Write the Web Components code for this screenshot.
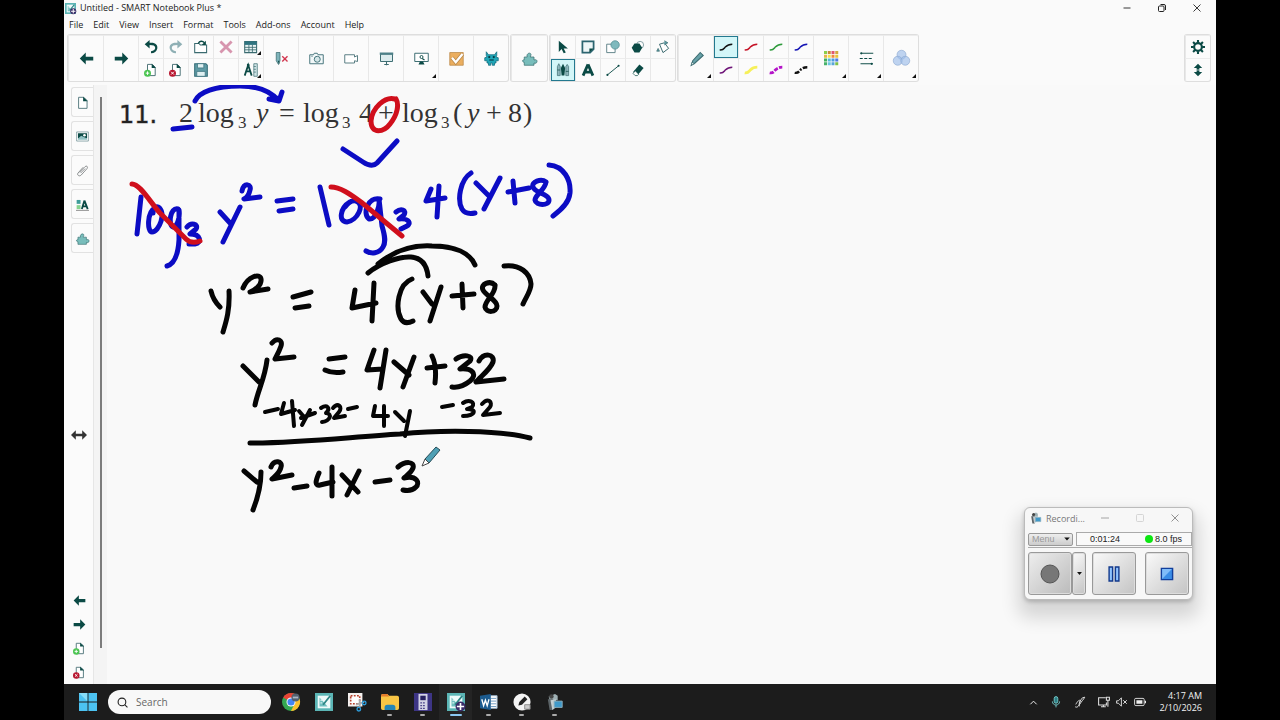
<!DOCTYPE html>
<html lang="en">
<head>
<meta charset="utf-8">
<title>Untitled - SMART Notebook Plus *</title>
<style>
  html, body { margin: 0; background: #000; }
  body { font-family: "Open Sans", "Noto Sans", sans-serif; font-size: 9px; color: #1b1b1b; }
</style>
</head>
<body>
<notebook-app></notebook-app>
<script>
const define = (tag, css, html, setup) => {
  const template = document.createElement('template');
  template.innerHTML = `<style>*{box-sizing:border-box}${css}</style>${html}`;
  customElements.define(tag, class extends HTMLElement {
    connectedCallback() {
      if (this.shadowRoot) return;
      const content = template.content.cloneNode(true);
      if (setup) setup(this, content);
      this.attachShadow({ mode: 'open' }).append(content);
    }
  });
};

/* ---------- icons, drawn on a 20 x 20 grid ---------- */
const page = '<path d="M5 2h7l4 4v12H5z" fill="#fff" stroke="#4d7378" stroke-width="1.4"/><path d="M11 1l6 6h-6z" fill="#0b4a45"/>';
const addPage = page + '<circle cx="5" cy="14.500" r="5" fill="#4cc552"/><path d="M5 12v5M2.500 14.500h5" stroke="#fff" stroke-width="1.4"/>';
const delPage = page + '<circle cx="5" cy="14.500" r="5" fill="#b8152f"/><path d="M3 12.500l4 4M7 12.500l-4 4" stroke="#fff" stroke-width="1.4"/>';
const squiggle = (c, w, dash) => `<path d="M1 14C6 15 7 12 9 10S14 6 19 6" fill="none" stroke="${c}" stroke-width="${w}" ${dash ? `stroke-dasharray="${dash}"` : ''}/>`;
const puzzle = '<path d="M3 8h4C5 3 12 1 12 5c0 1-1 2-1 3h5v4c3-1 4 0 4 2s-2 3-4 2v3H3v-4c-3 0-3-4 0-3z" fill="#78bdbb" stroke="#3b7173" stroke-width="1"/>';
const swatches = ['#8bcf4a','#c98a3a','#e0566d','#d2a83c','#e8b64a','#f6e34a','#f08a3c','#e8c53a','#43b35c','#54b9d8','#4d9de0','#4f7de0','#48b26a','#6cc6e0','#58a6d8','#7cc04a'];
const notebook = '<rect width="20" height="20" fill="#5bb5b5"/><path d="M3 3h14v14H3z" fill="#eefafa"/><path d="M5 15V5l9 10z" fill="#6fbfbf"/><path d="M6 8h2M6 11h2" stroke="#fff"/><path d="M9 13L17 3" stroke="#2d8585" stroke-width="2"/>';
const camcorder = '<path d="M3 4l7-3 3 2v5H4z" fill="#9fb0b4"/><path d="M2 7h6v12H4z" fill="#5b6367"/><path d="M5 8l6-1v9l-4 3z" fill="#c3ced1"/><path d="M9 9h9v7H9z" fill="#3f99c9" stroke="#8fb0bd"/><circle cx="6" cy="4" r="2.500" fill="#444"/>';
const ICONS = {
  back: '<path d="M9 2L1 10l8 8v-5.500h10v-5H9z" fill="#0b4a45"/>',
  forward: '<path d="M11 2l8 8-8 8v-5.500H1v-5h10z" fill="#0b4a45"/>',
  undo: '<path d="M8 0v4c8-1 12 3 11 8-1 4-4 7-9 7v-3c5-1 6-3 6-5 0-3-3-4-8-4v5L1 6z" fill="#0b4a45"/>',
  redo: '<path d="M12 0v4C4 3 0 7 1 12c1 4 4 7 9 7v-3c-5-1-6-3-6-5 0-3 3-4 8-4v5l7-6z" fill="#8fb0b5"/>',
  addPage, delPage,
  open: '<path d="M1 5h6l2 2h9v11H1z" fill="#fff" stroke="#3b6b70" stroke-width="1.500"/><path d="M6 5c2-4 6-4 9-1" fill="none" stroke="#0b4a45" stroke-width="2"/><path d="M17 1v6h-6z" fill="#0b4a45"/>',
  save: '<path d="M1 1h16l2 2v16H1z" fill="#5f9ba5" stroke="#356d78" stroke-width="1.500"/><path d="M5 1h9v6H5zM4 12h12v7H4z" fill="#dff0f2" stroke="#356d78"/>',
  remove: '<path d="M2 2l16 16M18 2L2 18" stroke="#d795ae" stroke-width="4"/>',
  table: '<path d="M1 2h17v16H1z" fill="#e9f4f5" stroke="#3b6b70" stroke-width="1.500"/><path d="M1 2h17v5H1z" fill="#2f7480"/><path d="M1 10.500h17M1 14h17M7 7v11M12 7v11" stroke="#3b6b70" stroke-width="1.200"/>',
  measure: '<path d="M1 18L6 3l5 15M3 12h6" fill="none" stroke="#0b4a45" stroke-width="2.500"/><circle cx="6" cy="3" r="2" fill="#0b4a45"/><path d="M14 1h5v18h-5z" fill="#cfe4e6" stroke="#3b6b70"/><path d="M14 5h3M14 9h3M14 13h3" stroke="#3b6b70"/>',
  clearInk: '<path d="M3 2h5v11l-2 5-3-5z" fill="#7fb4bb" stroke="#3b6b70"/><path d="M5 13h2v5z" fill="#0b4a45"/><path d="M11 7l7 7M18 7l-7 7" stroke="#d2354e" stroke-width="1.800"/>',
  camera: '<path d="M1 5h5l1-2h4l1 2h7v12H1z" fill="#f2f8f9" stroke="#47757b" stroke-width="1.300"/><circle cx="11" cy="11" r="4" fill="#d4e6e8" stroke="#47757b" stroke-width="1.300"/><path d="M3 7h2" stroke="#47757b"/>',
  video: '<path d="M1 5h13v3l4-2v8l-4-1v3H1z" fill="#fff" stroke="#587d83" stroke-width="1.300"/>',
  screen: '<path d="M2 4h16v10H2z" fill="#dcecee" stroke="#3b6b70" stroke-width="1.300"/><path d="M1 2h18v3H1z" fill="#4c8088"/><path d="M10 14v5M7 18h6" stroke="#3b6b70" stroke-width="1.400"/>',
  monitor: '<path d="M1 3h18v11H1z" fill="#fff" stroke="#3b6b70" stroke-width="1.300"/><path d="M6 18h8l-2-4H8z" fill="#0b4a45"/><circle cx="10" cy="8" r="2" fill="none" stroke="#0b4a45" stroke-width="1.200"/><path d="M11 10l3 2" stroke="#0b4a45" stroke-width="1.500"/>',
  check: '<path d="M1 2h18v17H1z" fill="#ebae5f" stroke="#b98849"/><path d="M4 9l5 6 9-11" fill="none" stroke="#b98849" stroke-width="5"/><path d="M4 9l5 6 9-11" fill="none" stroke="#fff" stroke-width="3"/>',
  monster: '<path d="M3 1l3 4h8l3-4v5l-1 2 3 1v4h-3v3h-2v3h-3v-3H9v3H6v-3H4v-3H1V9l3-1-1-2z" fill="#20a7b8" stroke="#126a7c"/><circle cx="7" cy="8" r="1.500" fill="#043a44"/><circle cx="13" cy="8" r="1.500" fill="#043a44"/><path d="M7 12h6" stroke="#043a44" stroke-width="1.500"/>',
  puzzle,
  select: '<path d="M4 1v16l4-4 3 6 3-1-3-6h6z" fill="#0b4a45"/>',
  note: '<path d="M2 2h16v11l-5 5H2z" fill="#eef6f7" stroke="#2c6570" stroke-width="2.500"/><path d="M12 18v-6h6z" fill="#0b4a45"/>',
  shapes: '<path d="M1 6h12v12H1z" fill="#fff" stroke="#587d83" stroke-width="1.300"/><circle cx="13" cy="7" r="6" fill="#7fb9bd" stroke="#4a868c"/>',
  polygons: '<circle cx="13" cy="7" r="5" fill="#fff" stroke="#587d83"/><path d="M5 5h7l4 6-4 7H5l-4-7z" fill="#0b4a45"/>',
  fill: '<path d="M5 6l7-2 6 8-8 6z" fill="#fff" stroke="#3b6b70" stroke-width="1.400"/><path d="M12 1l5 3-5 3M3 12l-2 4h4z" fill="#5b9aa3" stroke="#3b6b70"/>',
  pens: '<path d="M2 5l2-4 2 4v13H2zM14 5l2-3 2 3v13h-4z" fill="#8fb7bd" stroke="#3b6b70"/><path d="M10 1l3 6-1 11H8L7 7z" fill="#0b4a45"/><path d="M2 10h4M14 12h4" stroke="#0b4a45"/>',
  text: '<path d="M10 2L3 18M10 2l7 16M6 13h8" fill="none" stroke="#0b4a45" stroke-width="4"/>',
  line: '<path d="M2 17L18 4" stroke="#0b4a45" stroke-width="1.300"/><circle cx="2" cy="17" r="1.500" fill="#0b4a45"/><circle cx="18" cy="4" r="1.500" fill="#0b4a45"/>',
  eraser: '<path d="M12 2l6 5-9 11-6-5z" fill="#0b4a45"/><path d="M6 11l5 5-2 2H6l-3-3z" fill="#fff" stroke="#0b4a45"/>',
  pencil: '<path d="M15 2l4 4-11 10-5 3 2-6z" fill="#67a1a8" stroke="#3b6b70" stroke-width="1.400"/><path d="M3 19l1-4 3 2z" fill="#fff" stroke="#3b6b70"/>',
  inkBlack: squiggle('#111', 2.2), inkRed: squiggle('#c51226', 2.2), inkGreen: squiggle('#2d9a3b', 2.2), inkBlue: squiggle('#1414b4', 2.2),
  inkPurple: squiggle('#6e1478', 2.2), inkYellow: squiggle('#f6f05a', 4), inkMagenta: squiggle('#b414c8', 4, '6 2'), inkDash: squiggle('#111', 3.4, '7 2 3 2'),
  palette: swatches.map((c, i) => `<path d="M${i % 4 * 5} ${(i >> 2) * 5}h4v4h-4z" fill="${c}"/>`).join(''),
  lines: '<path d="M3 3h16M2 17h16" stroke="#0b4a45" stroke-width="1.300"/><path d="M1 10h18" stroke="#0b4a45" stroke-width="1.500" stroke-dasharray="4 2"/><circle cx="3" cy="3" r="1.500" fill="#0b4a45"/><circle cx="17" cy="17" r="1.500" fill="#0b4a45"/>',
  rings: '<g fill="#9dbdea" fill-opacity=".65" stroke="#8aa6cf" stroke-width=".8"><circle cx="10" cy="5" r="6"/><circle cx="5" cy="13" r="6"/><circle cx="15" cy="13" r="6"/></g>',
  gear: '<circle cx="10" cy="10" r="5.500" fill="none" stroke="#0b4a45" stroke-width="3"/><g stroke="#0b4a45" stroke-width="3"><path d="M10 4V0M10 16v4M4 10H0M16 10h4M6 6L3 3M14 14l3 3M14 6l3-3M6 14l-3 3"/></g>',
  updown: '<path d="M10 1l6 6h-4v6h4l-6 6-6-6h4V7H4z" fill="#0b4a45"/><path d="M2 10h16" stroke="#fafafa" stroke-width="1"/>',
  leftright: '<path d="M0 10l6-6v4.500h8V4l6 6-6 6v-4.500H6V16z" fill="#333"/>',
  blank: '<path d="M4 2h8l5 5v12H4z" fill="#fff" stroke="#4d7378" stroke-width="1.400"/><path d="M11 1l7 7h-7z" fill="#0b4a45"/>',
  gallery: '<path d="M1 3h18v14H1z" fill="#fff" stroke="#5a8085"/><path d="M3 5h14v8H3z" fill="#0b4a45"/><path d="M3 13l5-4 9 4v2H3z" fill="#8fc0c2"/><circle cx="13" cy="8" r="2" fill="#fff"/>',
  clip: '<path d="M5 13l9-9c2-2 5 0 3 3L8 17c-3 3-7 0-5-3l8-9M7 14l7-7" fill="none" stroke="#8b8f90" stroke-width="1.500"/>',
  props: '<path d="M1 3h6v6H1z" fill="#3f9d9a"/><path d="M1 11h6v6H1z" fill="#86d38f"/><path d="M13 4L9 17M13 4l5 13M10 13h7" fill="none" stroke="#0b4a45" stroke-width="2.800"/><path d="M0 19h20" stroke="#555"/>',
  app: notebook + '<circle cx="15" cy="15" r="5.500" fill="#3a2c68"/><path d="M15 11v8M11 15h8" stroke="#fff" stroke-width="1.800"/>',
  notebook,
  min: '<path d="M3 10h14" stroke="#222" stroke-width="1.800"/>',
  restore: '<rect x="3" y="6" width="11" height="11" rx="2" fill="none" stroke="#222" stroke-width="2"/><path d="M7 3h7q3 0 3 3v8" fill="none" stroke="#222" stroke-width="2"/>',
  close: '<path d="M3 3l14 14M17 3L3 17" stroke="#222" stroke-width="1.800"/>',
  maxLight: '<rect x="3" y="3" width="14" height="14" rx="2" fill="none" stroke="#ccc" stroke-width="1.600"/>',
  minLight: '<path d="M2 10h16" stroke="#888" stroke-width="1.500"/>',
  closeLight: '<path d="M3 3l14 14M17 3L3 17" stroke="#777" stroke-width="1.600"/>',
  camcorder,
  record: '<circle cx="10" cy="10" r="9" fill="#777" stroke="#555"/>',
  pause: '<path d="M3 0h5v20H3zM12 0h5v20h-5z" fill="#8fc4ff" stroke="#12398c" stroke-width="2"/>',
  stop: '<path d="M2 2h16v16H2z" fill="#3b8de6" stroke="#123f9c" stroke-width="2"/><path d="M3 3h14L3 17z" fill="#9fd0ff" opacity=".7"/>',
  caret: '<path d="M3 6h14l-7 8z" fill="#111"/>',
  windows: '<path d="M0 0h9.500v9.500H0zM10.500 0H20v9.500h-9.500zM0 10.500h9.500V20H0zM10.500 10.500H20V20h-9.500z" fill="#4cc2f1"/><path d="M0 0h9v9z" fill="#86dcf8"/>',
  search: '<circle cx="9" cy="9" r="7" fill="none" stroke="#222" stroke-width="2"/><path d="M14 14l5 5" stroke="#222" stroke-width="2"/>',
  chrome: '<circle cx="10" cy="10" r="10" fill="#34a853"/><path d="M1.300 5A10 10 0 0 1 18.700 5L10 10z" fill="#ea4335"/><path d="M18.700 5A10 10 0 0 1 10 20l4-8V5z" fill="#fbc02d"/><circle cx="10" cy="10" r="5" fill="#fff"/><circle cx="10" cy="10" r="4" fill="#4285f4"/><circle cx="15" cy="5" r="4.500" fill="#53606e"/><path d="M12 5h6" stroke="#a9b6c6" stroke-width="2"/>',
  snip: '<path d="M0 0h16v15H0z" fill="#f4f1ef"/><path d="M3 3h10v9H3z" fill="#fff" stroke="#b8412c" stroke-width="1.800" stroke-dasharray="2 1.500"/><path d="M9 13l9-3M13 7l0 9" stroke="#aaa" stroke-width="2"/><circle cx="18" cy="11" r="2" fill="none" stroke="#2d9cdb" stroke-width="1.500"/><circle cx="12" cy="18" r="2" fill="none" stroke="#2d9cdb" stroke-width="1.500"/>',
  folder: '<path d="M0 3q0-2 2-2h5l2 2h9q2 0 2 2v12q0 2-2 2H2q-2 0-2-2z" fill="#f8c545"/><path d="M0 3q0-2 2-2h5l2 3H0z" fill="#e37c2c"/><path d="M4 19v-3q0-3 3-3h6q3 0 3 3v3z" fill="#2284b8"/>',
  calc: '<path d="M0 0h20v20H0z" fill="#3d3585"/><path d="M5 1h10v18H5z" fill="#d3d3e6"/><path d="M7 3h6v5H7z" fill="#272260"/><path d="M7 11h6M7 14h6M7 17h6" stroke="#4e478c" stroke-width="1.500" stroke-dasharray="2 1"/>',
  word: '<path d="M8 3h11v14H8z" fill="#fff" stroke="#9db7ce"/><path d="M12 6h6M12 9h6M12 12h6M12 15h6" stroke="#6795bd"/><path d="M0 3l12-2v18L0 17z" fill="#1c5b8f"/><path d="M2 7l2 7 2-6 2 6 2-7" fill="none" stroke="#fff" stroke-width="1.500"/>',
  inkapp: '<circle cx="10" cy="10" r="9.500" fill="#f4f4f4"/><path d="M6 14l1-4 6-6 3 3-6 6z" fill="#222"/><path d="M13 13h6v5h-6z" fill="#ccc" stroke="#888"/>',
  chevron: '<path d="M3 14l7-7 7 7" fill="none" stroke="#eee" stroke-width="2.200"/>',
  mic: '<rect x="7" y="1" width="6" height="11" rx="3" fill="#2c7e84" stroke="#7cc" stroke-width="1.500"/><path d="M4 9c0 8 12 8 12 0M10 15v4" fill="none" stroke="#7cc" stroke-width="1.500"/>',
  penTray: '<path d="M3 14c5-9 8-8 7-4s-4 8 0 6M2 18c5 3 7-5 14-13l2-3-4 1C10 8 8 12 9 14" fill="none" stroke="#ddd" stroke-width="1.600"/>',
  net: '<path d="M13 3H1v12h13v-4M5 18h8M9 15v3" fill="none" stroke="#ddd" stroke-width="1.800"/><path d="M14 2h5v5h-5zM16.500 7v11" fill="none" stroke="#ddd" stroke-width="1.800"/>',
  mute: '<path d="M1 8h3l5-5v14l-5-5H1zM12 7l6 6M18 7l-6 6" fill="none" stroke="#ddd" stroke-width="1.600"/>',
  battery: '<rect x="1" y="4" width="16" height="12" rx="2" fill="none" stroke="#ddd" stroke-width="1.600"/><path d="M4 7h10v6H4zM18 8h2v4h-2z" fill="#eee"/>'
};
define('nb-icon', ':host{display:inline-block;flex:none;width:var(--size,14px);height:var(--size,14px)} svg{display:block;width:100%;height:100%;overflow:visible}', '', (el, content) => {
  const box = document.createElement('template');
  box.innerHTML = `<svg viewBox="0 0 20 20" aria-hidden="true">${ICONS[el.getAttribute('name')] || ''}</svg>`;
  content.append(box.content);
});

/* ---------- icon button, used by every bar ---------- */
define('nb-tool', `
  :host{display:grid;position:relative}
  button{all:unset;display:grid;place-items:center;min-width:0;min-height:0}
  :host([selected]) button{background:#d3f6f8;box-shadow:inset 0 0 0 1px #23798f}
  :host([more])::after{content:"";position:absolute;right:2px;bottom:3px;border:2px solid;border-color:transparent #111 #111 transparent}
`, '<button type="button"><nb-icon></nb-icon></button>', (el, content) => {
  content.querySelector('nb-icon').setAttribute('name', el.getAttribute('icon'));
  content.querySelector('button').setAttribute('aria-label', el.getAttribute('label') || el.getAttribute('icon'));
});

define('title-bar', `
  :host{display:flex;align-items:center;height:16px;gap:4px;padding:0 14px 0 1px}
  h1{flex:1;margin:0;font-size:9px;line-height:16px;font-weight:400}
  .controls{display:flex;gap:25px;--size:10px}
  .app{--size:11px}
`, `<nb-icon class="app" name="app"></nb-icon><h1>Untitled - SMART Notebook Plus *</h1>
  <div class="controls"><nb-tool icon="min" label="Minimize"></nb-tool><nb-tool icon="restore" label="Restore"></nb-tool><nb-tool icon="close" label="Close"></nb-tool></div>`);

define('menu-bar', `
  :host{display:flex;gap:10px;height:17px;padding:0 5px}
  button{all:unset;line-height:16px}
`, ['File','Edit','View','Insert','Format','Tools','Add-ons','Account','Help'].map(t => `<button type="button">${t}</button>`).join(''));

/* ---------- toolbar ---------- */
define('tool-group', `
  :host{display:grid;grid-template-rows:23px 23px;grid-template-columns:var(--cols);grid-auto-flow:column;border-radius:2px;box-shadow:0 0 0 1px #dedede;background:#fbfbfb}
  ::slotted(*){border-left:1px solid #e8e8e8;border-top:1px solid #ececec}
  ::slotted([big]){grid-row:span 2;--size:15px}
`, '<slot></slot>');
const tools = (list) => list.split(' ').map(t => {
  const [icon, flags = ''] = t.split(':');
  return `<nb-tool icon="${icon}" ${flags.includes('b') ? 'big' : ''} ${flags.includes('m') ? 'more' : ''} ${flags.includes('s') ? 'selected' : ''}></nb-tool>`;
}).join('');
define('tool-bar', `
  :host{display:flex;gap:3px;padding:2px 6px 3px 4px;height:52px;align-items:flex-start}
  .nav{--cols:35px 35px repeat(5,25px) repeat(7,35px)}
  .one{--cols:36px}
  .draw{--cols:repeat(5,25px)}
  .ink{--cols:35px repeat(4,25px) repeat(3,35px)}
  .set{--cols:25px;margin-left:auto}
`, `<tool-group class="nav">${tools('back:b forward:b undo addPage redo delPage open save remove')}<span></span>${tools('table:m measure:m clearInk:b camera:b video:b screen:b monitor:bm check:b monster:b')}</tool-group>
  <tool-group class="one">${tools('puzzle:b')}</tool-group>
  <tool-group class="draw">${tools('select pens:s note text shapes line polygons eraser fill')}<span></span></tool-group>
  <tool-group class="ink">${tools('pencil:bm inkBlack:s inkPurple inkRed inkYellow inkGreen inkMagenta inkBlue inkDash palette:bm lines:bm rings:bm')}</tool-group>
  <tool-group class="set">${tools('gear updown')}</tool-group>`);

/* ---------- side panel ---------- */
define('side-panel', `
  :host{display:flex;flex:none;width:43px}
  .rail{display:flex;flex-direction:column;width:30px;border-right:1px solid #e6e6e6;background:#fbfbfb}
  .tabs{display:grid;gap:4px;grid-auto-rows:30px;padding:2px 0 0 7px;--size:13px}
  .tabs nb-tool{border:1px solid #e2e2e2;border-right:0;border-radius:3px 0 0 3px}
  .handle{--size:16px;width:30px}
  .pages{display:grid;grid-auto-rows:24px;width:30px;--size:13px}
  .up{flex:6} .down{flex:5}
  .split{flex:1;display:flex;justify-content:center;background:#f4f4f4;padding:12px 0 36px}
  .split i{width:2px;background:#7c7c7c}
`, `<div class="rail"><nav class="tabs">${tools('blank gallery clip props puzzle')}</nav><span class="up"></span>
  <nb-tool class="handle" icon="leftright" label="Resize panel"></nb-tool><span class="down"></span>
  <div class="pages">${tools('back forward addPage delPage')}</div></div>
  <div class="split"><i></i></div>`);

/* ---------- board: typed problem and freehand ink ---------- */
const STROKES = [
  ['blue', `M173 129L192 127 M195 101C199 92 215 86 240 86C258 86 270 91 278 100 M282 92L279 101L269 99L279 98
    M141 197L137 234 M155 208C147 212 147 232 152 232C159 232 167 212 158 207C156 206 153 209 153 213
    M178 209C170 207 168 225 173 227C178 226 180 216 179 210L179 240C178 256 174 264 167 266
    M187 227C191 222 199 224 196 229L190 234C201 234 202 243 195 244L189 244
    M220 212L230 223 M240 207L223 242 M242 191C244 182 252 184 250 190C249 195 246 198 244 199L260 197
    M277 201L293 199 M279 211L293 209 M343 149L363 162Q372 168 377 163L397 141
    M320 187L329 225 M350 202C340 208 338 222 347 222C357 221 366 204 356 201C352 200 348 203 345 207
    M380 199C368 196 362 214 369 219C376 220 380 206 379 199L382 226C385 236 386 242 383 247C379 254 371 254 366 251
    M396 212C401 208 407 210 404 215L399 219C410 218 411 224 407 226L401 229
    M431 189L426 201L445 198 M439 186L437 217 M471 173C460 180 457 200 462 209C465 214 470 214 475 213
    M476 183L488 195 M500 178L484 209 M508 192L529 188 M513 181L515 203
    M546 182C541 178 531 182 533 187C535 193 549 194 549 200C549 206 536 206 535 200C535 195 545 190 546 182
    M549 165C564 166 571 180 570 193C569 203 561 210 553 216`],
  ['red', `M132 184C140 184 150 202 160 213L186 239C190 243 195 243 200 241 M331 187C340 187 350 194 361 202L402 236
    M395 99C385 96 372 108 371 121C371 135 384 132 390 124C398 114 399 104 396 99`],
  ['black', `M368 273C380 263 400 256 411 257C423 258 427 267 428 276 M378 264C395 250 415 245 432 246C455 246 470 253 475 265
    M211 291Q213 300 220 307 M229 291C230 310 226 322 223 332 M243 288C248 276 260 273 261 279C262 285 255 290 250 292L268 289
    M293 297L311 292 M295 308L309 306 M355 290L352 308L376 303 M374 283L372 321
    M412 279C398 284 395 308 401 319C404 324 409 323 413 321 M423 292L432 304 M441 287L430 321
    M452 296L474 294 M462 284L463 308 M495 285C490 280 480 284 483 290C486 296 497 300 497 306C497 313 486 313 485 307C485 300 496 294 495 285
    M504 266C520 264 530 273 531 284C531 291 526 297 523 304
    M243 366L259 382 M267 360C265 378 258 390 255 405 M272 343C277 337 283 340 281 346C279 352 276 357 275 359L294 357
    M329 359L345 357 M325 370C331 373 337 373 343 372 M374 350L367 370L383 369 M386 350L380 388
    M394 362L409 375 M414 357L403 387 M427 368L445 366 M432 356Q437 366 435 383
    M456 359C463 354 474 355 470 361L460 369C472 368 478 374 470 381C465 385 458 388 452 387
    M479 361C484 352 495 354 493 362C490 370 480 377 476 382L504 379
    M250 443C300 443 350 437 400 434C440 430 500 430 530 438
    M244 471L257 482 M261 472C261 490 256 502 253 510 M271 467C274 459 283 461 281 467C280 473 275 476 272 479L292 475
    M294 488L307 486 M319 473C315 482 315 486 320 485L333 482 M332 467L332 496 M342 475L358 492 M359 471L347 495
    M375 482L390 480 M398 467C405 461 415 461 413 468C411 473 406 476 404 478C417 475 420 483 416 487C412 491 407 491 403 490`],
  ['black thin', `M265 412L278 409 M284 403L281 414L295 410 M292 401L294 426 M299 411L305 418 M310 410L302 425 M301 418L315 413
    M321 408C327 404 331 408 326 413C333 414 330 421 322 422 M333 408C338 402 343 407 339 412L334 418L345 416
    M348 409L357 407 M375 406L373 416L388 416 M384 406L384 426 M395 412L404 421 M410 411L405 436
    M442 407L453 405 M463 403C469 399 476 402 472 407L467 409C477 409 476 416 463 416 M482 404C488 397 493 402 490 407L483 415L500 413`]
];
define('ink-board', `
  :host{display:block;flex:1;position:relative;overflow:hidden;background:#f9f9f9}
  svg{position:absolute;inset:0;width:100%;height:100%}
  .ink path{fill:none;stroke-width:5;stroke-linecap:round;stroke-linejoin:round}
  .ink .thin{stroke-width:4}
  .blue{stroke:#0c0cc4} .red{stroke:#d00f1c} .black{stroke:#050505}
  .typed{font:28px "Liberation Serif","Times New Roman",serif;fill:#333}
  .num{font:24px "DejaVu Sans",sans-serif;fill:#222;stroke:#222;stroke-opacity:.4}
  .sub{font-size:17px} .var{font-style:italic}
  rec-window{position:absolute;right:23px;top:422px}
`, `<svg role="img" aria-label="Solving 2 log base 3 of y equals log base 3 of 4 plus log base 3 of y plus 8">
  <g transform="translate(-107 -85)">
    <text class="num" x="119" y="123">11.</text>
    <text class="typed" y="122"><tspan x="179">2</tspan><tspan x="198">log</tspan><tspan class="sub" x="238" y="128">3</tspan>
      <tspan class="var" x="256" y="122">y</tspan><tspan x="279">=</tspan><tspan x="303">log</tspan><tspan class="sub" x="342" y="128">3</tspan>
      <tspan x="359" y="122">4</tspan><tspan x="378">+</tspan><tspan x="402">log</tspan><tspan class="sub" x="441" y="128">3</tspan>
      <tspan x="453" y="122">(</tspan><tspan class="var" x="467">y</tspan><tspan x="486">+</tspan><tspan x="508">8</tspan><tspan x="523">)</tspan></text>
    <g class="ink">${STROKES.map(([c, d]) => `<path class="${c}" d="${d}"/>`).join('')}</g>
    <path d="M425 459l11-12 4 3-11 13z" fill="#4fa0b5" stroke="#274d58"/><path d="M425 459l-3 7 7-3z" fill="#fff" stroke="#444"/>
  </g></svg><rec-window></rec-window>`);

/* ---------- recorder ---------- */
define('rec-window', `
  :host{display:block;width:169px;padding:0 3px 4px;border:1px solid #bbb;border-radius:6px;background:#f7f7f7;box-shadow:0 12px 18px 6px #00000024,0 2px 4px #0003;color:#777}
  header{display:flex;align-items:center;height:23px;gap:4px;padding:0 9px 3px 2px}
  header b{font-weight:400;flex:1;font-size:9px}
  header div{display:flex;gap:25px;--size:10px}
  .row{display:flex;align-items:center;gap:3px;height:17px;margin:0 -3px 4px 0;border-bottom:1px solid #aaa}
  .menu{display:flex;align-items:center;justify-content:space-between;width:45px;height:13px;padding:0 1px 0 3px;border:1px solid #999;border-radius:2px;background:linear-gradient(#eee,#ccc);color:#999;font:9px "Liberation Sans",sans-serif;--size:8px}
  .status{flex:1;display:flex;align-items:center;justify-content:flex-end;height:14px;border:1px solid #aaa;padding-right:9px;background:#f9f9f9;color:#222;font:9px "Liberation Sans",sans-serif}
  .status time{margin-right:25px}
  .status i{width:8px;height:8px;border-radius:4px;background:#0be612;margin-right:2px}
  .btns{display:flex}
  .btns nb-tool{width:44px;height:43px;border:1px solid #999;border-radius:3px;background:linear-gradient(135deg,#fafafa,#c4c4c4);box-shadow:inset 0 0 0 1px #ddd;--size:14px}
  .btns .rec{--size:20px;background:linear-gradient(135deg,#eee,#bbb)} .btns .drop{width:14px;--size:7px;margin-right:6px} .btns .stop{margin-left:auto}
`, `<header><nb-icon name="camcorder" style="--size:12px"></nb-icon><b>Recordi...</b><div><nb-tool icon="minLight" label="Minimize"></nb-tool><nb-tool icon="maxLight" label="Maximize"></nb-tool><nb-tool icon="closeLight" label="Close"></nb-tool></div></header>
  <div class="row"><button type="button" class="menu">Menu<nb-icon name="caret"></nb-icon></button><div class="status"><time>0:01:24</time><i></i><span>8.0 fps</span></div></div>
  <div class="btns"><nb-tool class="rec" icon="record"></nb-tool><nb-tool class="drop" icon="caret" label="Record options"></nb-tool><nb-tool icon="pause"></nb-tool><nb-tool class="stop" icon="stop"></nb-tool></div>`);

/* ---------- taskbar ---------- */
define('task-bar', `
  :host{display:flex;align-items:center;flex:none;height:36px;padding:0 14px 0 15px;background:#1c1c1c;color:#f2f2f2}
  .start{--size:18px;margin-right:11px}
  label{display:flex;align-items:center;gap:8px;width:163px;height:24px;padding:0 9px;border-radius:12px;background:#f8f8f8;--size:11px}
  input{all:unset;flex:1;min-width:0;font-size:10px;color:#333}
  input::placeholder{color:#666;opacity:1}
  .apps{display:flex;margin-left:3px;--size:18px}
  .apps nb-tool{width:33px;height:36px}
  .apps .run::before{content:"";position:absolute;bottom:4px;left:14px;width:5px;height:2px;border-radius:1px;background:#aaa}
  .apps .on{background:#242424}
  .apps .on::before{left:11px;width:12px;background:#8cc8f2}
  .tray{display:flex;margin-left:auto;gap:12px;--size:12px}
  .quick{display:flex;gap:6px}
  time{margin-left:13px;text-align:right;line-height:12px}
`, `<nb-tool class="start" icon="windows" label="Start"></nb-tool>
  <label><nb-icon name="search"></nb-icon><input type="search" placeholder="Search" aria-label="Search"></label>
  <div class="apps">${['chrome','notebook','snip','folder:run','calc:run','app:run on','word:run','inkapp:run','camcorder:run'].map(a => { const [i, c = ''] = a.split(':'); return `<nb-tool icon="${i}" class="${c}"></nb-tool>`; }).join('')}</div>
  <div class="tray"><nb-tool icon="chevron" style="--size:9px"></nb-tool><nb-tool icon="mic" label="Microphone"></nb-tool><nb-tool icon="penTray" label="Pen"></nb-tool><div class="quick"><nb-tool icon="net" label="Network"></nb-tool><nb-tool icon="mute" label="Volume"></nb-tool><nb-tool icon="battery"></nb-tool></div></div>
  <time>4:17 AM<br>2/10/2026</time>`);

define('notebook-app', `
  :host{display:flex;flex-direction:column;min-height:100vh;margin:0 5%;background:#fafafa}
  main{flex:1;display:flex;min-height:520px}
`, '<title-bar></title-bar><menu-bar></menu-bar><tool-bar></tool-bar><main><side-panel></side-panel><ink-board></ink-board></main><task-bar></task-bar>');
</script>
</body>
</html>
